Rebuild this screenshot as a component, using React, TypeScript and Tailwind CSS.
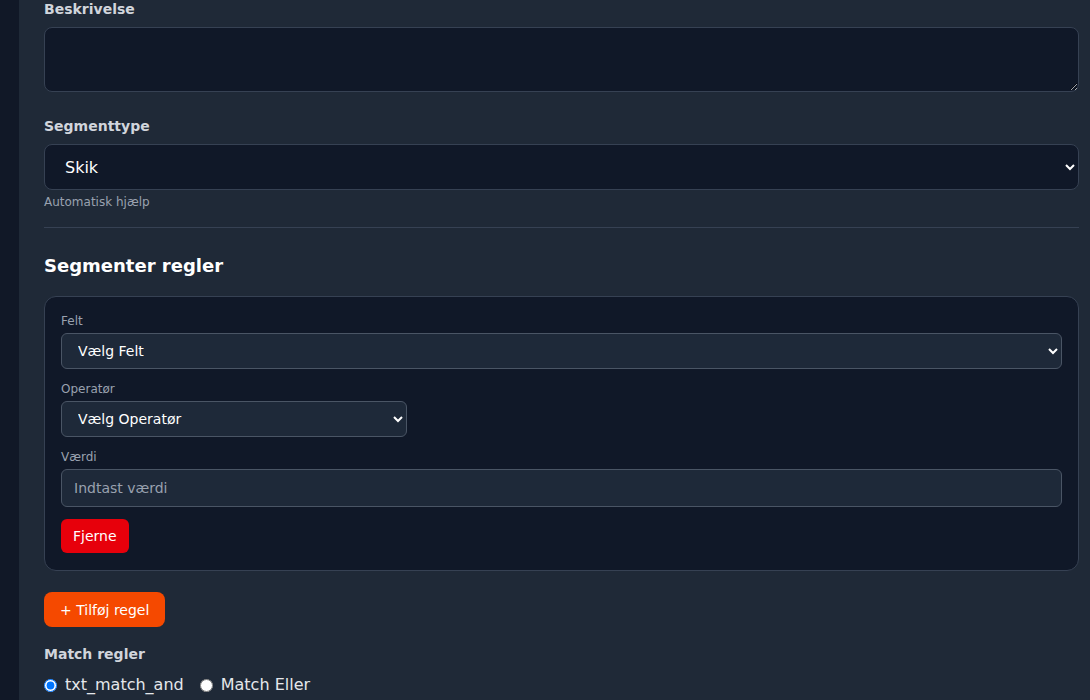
export default function App() {
  return (
    <div className="flex h-[700px] overflow-hidden bg-[#1f2937] font-['DejaVu_Sans',sans-serif] [color-scheme:dark]">
      <aside className="w-[20px] shrink-0 border-r border-[#1f2937] bg-[#111827]" />
      <main className="flex-1 pl-6 pr-[11px]">
        <div className="-mt-px">
          <label className="mb-2 block text-sm font-bold text-gray-300">Beskrivelse</label>
          <textarea className="block h-[65px] w-full rounded-lg border border-gray-700 bg-gray-900 px-4 py-2 text-white outline-none" />
        </div>

        <div className="mt-6">
          <label className="mb-2 block text-sm font-bold text-gray-300">Segmenttype</label>
          <select className="block h-[46px] w-full rounded-lg border border-gray-700 bg-gray-900 px-4 text-base text-white outline-none">
            <option>Skik</option>
          </select>
          <p className="mt-1 text-xs text-gray-400">Automatisk hjælp</p>
        </div>

        <hr className="mt-[17px] border-gray-700" />

        <h3 className="mt-6 mb-4 text-lg font-bold text-white">Segmenter regler</h3>

        <div className="rounded-xl border border-gray-700 bg-gray-900 px-4 pt-4 pb-[17px]">
          <label className="mb-1 block text-xs text-gray-400">Felt</label>
          <select className="block h-[36px] w-full rounded-md border border-gray-600 bg-gray-800 px-3 text-sm text-white outline-none">
            <option>Vælg Felt</option>
          </select>

          <label className="mt-3 mb-1 block text-xs text-gray-400">Operatør</label>
          <select className="block h-[36px] w-[346px] rounded-md border border-gray-600 bg-gray-800 px-3 text-sm text-white outline-none">
            <option>Vælg Operatør</option>
          </select>

          <label className="mt-3 mb-1 block text-xs text-gray-400">Værdi</label>
          <input
            placeholder="Indtast værdi"
            className="block h-[38px] w-full rounded-md border border-gray-600 bg-gray-800 px-3 text-sm text-white outline-none placeholder:text-gray-400"
          />

          <button className="mt-3 rounded-md bg-[#e7000b] px-3 py-[7px] text-sm text-white">Fjerne</button>
        </div>

        <button className="mt-[21px] flex h-[35px] items-center rounded-lg bg-[#f54900] px-4 text-sm text-white">+ Tilføj regel</button>

        <p className="mt-[17px] text-sm font-bold text-gray-300">Match regler</p>
        <div className="mt-[9px] flex items-center text-base text-gray-200">
          <label className="flex items-center gap-2">
            <input type="radio" name="match" defaultChecked className="h-[13px] w-[13px] [color-scheme:light]" />
            txt_match_and
          </label>
          <label className="ml-4 flex items-center gap-2">
            <input type="radio" name="match" className="h-[13px] w-[13px] [color-scheme:light]" />
            Match Eller
          </label>
        </div>
      </main>
    </div>
  );
}
